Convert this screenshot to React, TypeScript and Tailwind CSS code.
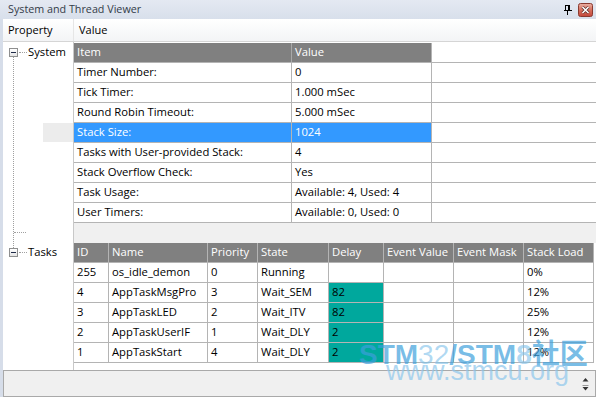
import React from "react";

// system info rows
const items = [
	["Timer Number:", "0"],
	["Tick Timer:", "1.000 mSec"],
	["Round Robin Timeout:", "5.000 mSec"],
	["Stack Size:", "1024"],
	["Tasks with User-provided Stack:", "4"],
	["Stack Overflow Check:", "Yes"],
	["Task Usage:", "Available: 4, Used: 4"],
	["User Timers:", "Available: 0, Used: 0"],
];

const tasks = [
	{ id: "255", name: "os_idle_demon", prio: "0", state: "Running", delay: "", load: "0%" },
	{ id: "4", name: "AppTaskMsgPro", prio: "3", state: "Wait_SEM", delay: "82", load: "12%" },
	{ id: "3", name: "AppTaskLED", prio: "2", state: "Wait_ITV", delay: "82", load: "25%" },
	{ id: "2", name: "AppTaskUserIF", prio: "1", state: "Wait_DLY", delay: "2", load: "12%" },
	{ id: "1", name: "AppTaskStart", prio: "4", state: "Wait_DLY", delay: "2", load: "12%" },
];

const cols = [
	{ label: "ID", w: "w-[35px]" },
	{ label: "Name", w: "w-[99px]" },
	{ label: "Priority", w: "w-[50px]" },
	{ label: "State", w: "w-[71px]" },
	{ label: "Delay", w: "w-[55px]" },
	{ label: "Event Value", w: "w-[70px]" },
	{ label: "Event Mask", w: "w-[70px]" },
	{ label: "Stack Load", w: "w-[70px]" },
];

function MinusBox() {
	return (
		<div className="w-[9px] h-[9px] shrink-0 border border-[#8e8f8f] bg-gradient-to-b from-white to-[#e4e4e4] flex items-center justify-center">
			<div className="w-[5px] h-[1px] bg-[#1f2b48]" />
		</div>
	);
}

function Pin() {
	return (
		<svg width="8" height="10" viewBox="0 0 8 10">
			<rect x="1.5" y="0.5" width="4" height="5" fill="none" stroke="#000" />
			<rect x="4" y="0.5" width="1.5" height="5" fill="#000" />
			<rect x="0" y="5" width="8" height="1" fill="#000" />
			<rect x="3" y="6" width="1" height="4" fill="#000" />
		</svg>
	);
}

function CloseBtn() {
	return (
		<svg width="15" height="14" viewBox="0 0 15 14">
			<defs>
				<linearGradient id="cg" x1="0" y1="0" x2="0" y2="1">
					<stop offset="0" stopColor="#eab0a4" />
					<stop offset="0.5" stopColor="#d6705f" />
					<stop offset="1" stopColor="#c4473a" />
				</linearGradient>
			</defs>
			<rect x="0.5" y="0.5" width="14" height="13" rx="2" fill="url(#cg)" stroke="#8a3a30" />
			<path d="M4.5 4 L10.5 10 M10.5 4 L4.5 10" stroke="#5a2a25" strokeWidth="3" />
			<path d="M4.5 4 L10.5 10 M10.5 4 L4.5 10" stroke="#fff" strokeWidth="1.6" />
		</svg>
	);
}

function App() {
	return (
		<div className="w-[596px] h-[397px] overflow-hidden flex flex-col bg-[#d6dde9] font-['Open_Sans',sans-serif] text-[11.25px] text-black relative">
			{/* title bar */}
			<div className="h-[19px] shrink-0 flex items-center justify-between pl-[8px] pr-[3px] bg-gradient-to-b from-[#e4e9f2] to-[#d8dfeb]">
				<span className="text-[10.75px] text-[#333b48]">System and Thread Viewer</span>
				<div className="flex items-center gap-[6px]">
					<Pin />
					<CloseBtn />
				</div>
			</div>

			{/* property header */}
			<div className="h-[23px] shrink-0 ml-[3px] flex border-b border-[#d5d5d5] bg-gradient-to-b from-white to-[#f3f4f6] text-[11px]">
				<div className="w-[71px] border-r border-[#e6e6e6] pl-[5px] flex items-center">Property</div>
				<div className="flex-1 pl-[5px] flex items-center">Value</div>
			</div>

			{/* main */}
			<div className="h-[328px] shrink-0 ml-[3px] flex bg-white">
				{/* tree */}
				<div className="w-[71px] shrink-0 border-r border-[#c8c8c8] flex flex-col">
					<div className="mt-[6px] h-[9px] flex items-center pl-[6px]">
						<MinusBox />
						<div className="w-[8px] ml-[1px] border-t border-dotted border-[#a0a0a0]" />
						<span className="ml-[1px] whitespace-nowrap">System</span>
					</div>
					<div className="ml-[10px] h-[191px] border-l border-dotted border-[#a0a0a0] flex flex-col">
						<div className="mt-[66px] ml-[29px] h-[19px] bg-[#ececec]" />
						<div className="mt-[90px] w-[12px] border-t border-dotted border-[#a0a0a0]" />
					</div>
					<div className="h-[9px] flex items-center pl-[6px]">
						<MinusBox />
						<div className="w-[8px] ml-[1px] border-t border-dotted border-[#a0a0a0]" />
						<span className="ml-[1px] whitespace-nowrap">Tasks</span>
					</div>
				</div>

				{/* values */}
				<div className="flex-1 flex flex-col pt-[1px]">
					<div className="flex flex-col">
						<div className="h-[20px] flex border-b border-[#b4b4b4]">
							<div className="w-[218px] bg-[#808080] text-white pl-[3px] flex items-center border-r border-[#a8a8a8]">Item</div>
							<div className="w-[140px] bg-[#808080] text-white pl-[3px] flex items-center border-r border-[#b4b4b4]">Value</div>
							<div className="flex-1" />
						</div>
						{items.map(([k, v], i) => {
							const sel = i === 3;
							return (
								<div key={k} className="h-[20px] flex border-b border-[#b4b4b4]">
									<div className={`w-[218px] pl-[3px] flex items-center border-r border-[#b4b4b4] whitespace-nowrap ${sel ? "bg-[#3399ff] text-white" : ""}`}>{k}</div>
									<div className={`w-[140px] pl-[3px] flex items-center border-r border-[#b4b4b4] whitespace-nowrap ${sel ? "bg-[#3399ff] text-white" : ""}`}>{v}</div>
									<div className="flex-1" />
								</div>
							);
						})}
					</div>

					<div className="h-[20px] bg-[#f0f0f0]" />

					<div className="flex flex-col">
						<div className="h-[20px] flex">
							{cols.map((c) => (
								<div key={c.label} className={`${c.w} h-[20px] bg-[#808080] text-white pl-[3px] flex items-center border-r border-b border-[#b4b4b4] whitespace-nowrap`}>{c.label}</div>
							))}
						</div>
						{tasks.map((t) => (
							<div key={t.id} className="h-[20px] flex">
								<div className="w-[35px] pl-[3px] flex items-center border-r border-b border-[#b4b4b4]">{t.id}</div>
								<div className="w-[99px] pl-[3px] flex items-center border-r border-b border-[#b4b4b4]">{t.name}</div>
								<div className="w-[50px] pl-[3px] flex items-center border-r border-b border-[#b4b4b4]">{t.prio}</div>
								<div className="w-[71px] pl-[3px] flex items-center border-r border-b border-[#b4b4b4]">{t.state}</div>
								<div className={`w-[55px] pl-[3px] flex items-center border-r border-b border-[#b4b4b4] ${t.delay ? "bg-[#00a89d]" : ""}`}>{t.delay}</div>
								<div className="w-[70px] border-r border-b border-[#b4b4b4]" />
								<div className="w-[70px] border-r border-b border-[#b4b4b4]" />
								<div className="w-[70px] pl-[3px] flex items-center border-r border-b border-[#b4b4b4]">{t.load}</div>
							</div>
						))}
					</div>
				</div>
			</div>

			{/* description pane */}
			<div className="h-[27px] shrink-0 ml-[3px] border border-[#a9a9a9] bg-[#f0f0f0] flex items-center justify-end pr-[6px]">
				<svg width="7" height="14" viewBox="0 0 7 14">
					<path d="M3.5 1 L6.5 4.5 L0.5 4.5 Z" fill="#333" />
					<rect x="0.5" y="8" width="6" height="1" fill="#999" />
					<path d="M0.5 10 L6.5 10 L3.5 13.5 Z" fill="#333" />
				</svg>
			</div>

			{/* watermark */}
			<div className="absolute left-[359px] top-[338px] leading-none font-['Liberation_Sans',sans-serif] text-[28px] font-bold whitespace-nowrap pointer-events-none">
				<span className="text-[#3d9fdc]/70">STM</span>
				<span className="text-[#7cc0ea]/60 font-normal">32</span>
				<span className="text-[#3d9fdc]/70">/STM</span>
				<span className="text-[#7cc0ea]/60">8</span>
				<span className="text-[#3d9fdc]/70 font-['Noto_Sans_CJK_SC',sans-serif]">社区</span>
			</div>
			<div className="absolute left-[386px] top-[358px] leading-none font-['Liberation_Sans',sans-serif] text-[27px] text-[#8cc6ec]/70 whitespace-nowrap pointer-events-none">
				www.stmcu.org
			</div>
		</div>
	);
}

export default App;
